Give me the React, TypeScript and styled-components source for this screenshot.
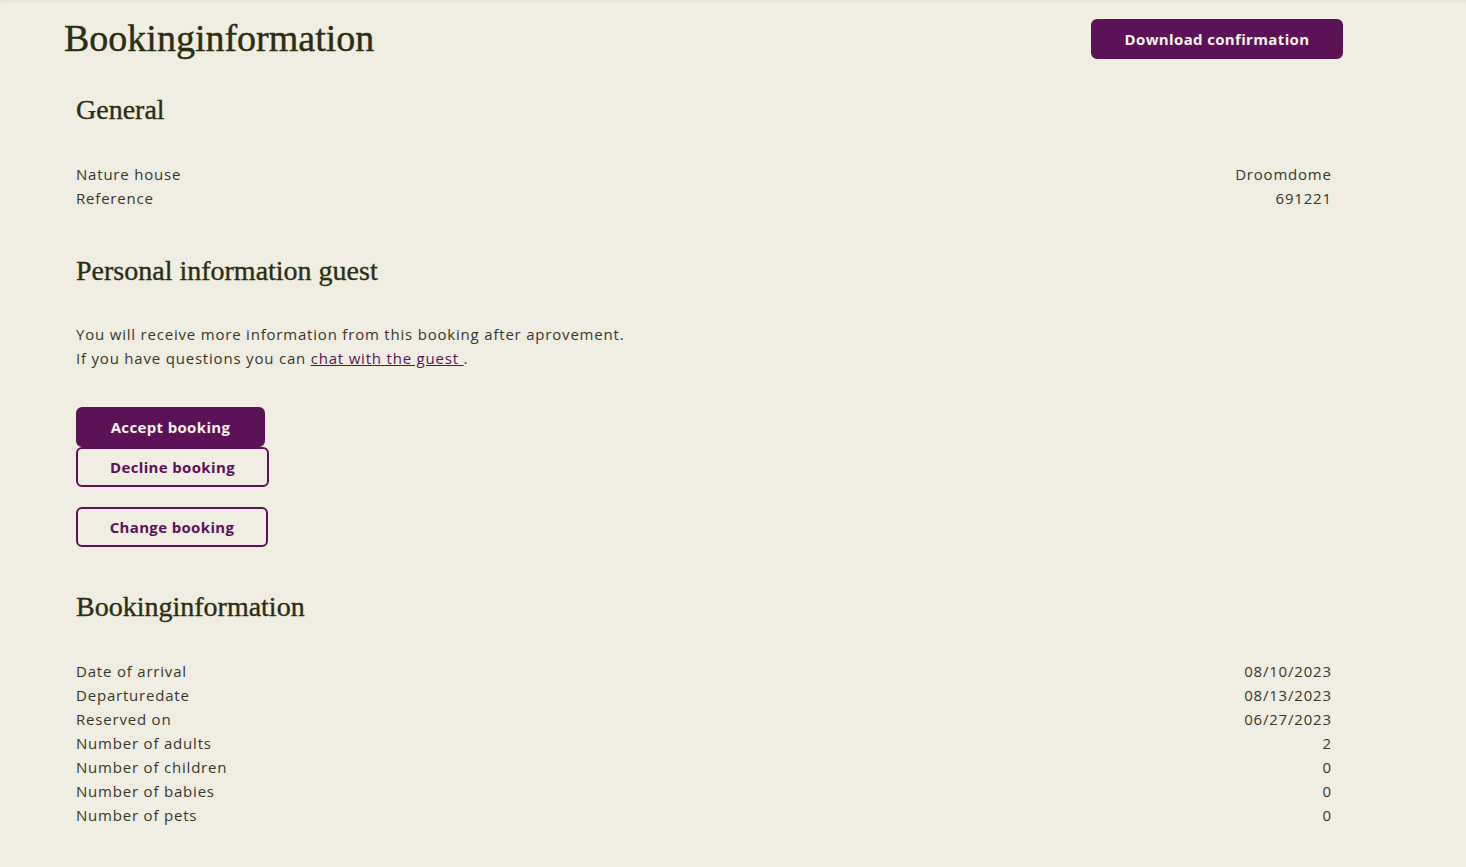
import React from "react";
import styled, { createGlobalStyle } from "styled-components";

const GlobalStyle = createGlobalStyle`
  html, body {
    margin: 0;
    padding: 0;
    background: #f0ede2;
  }
  body {
    font-family: "Open Sans", "Liberation Sans", sans-serif;
    color: #37372a;
  }
  * { box-sizing: border-box; }
`;

const Page = styled.div`
  min-height: 867px;
  background: #f0ede2;
  box-shadow: inset 0 3px 3px -2px rgba(0, 0, 0, 0.06);
  padding: 16px 123px 40px 64px;
`;

const Header = styled.header`
  display: flex;
  justify-content: space-between;
  align-items: flex-start;
`;

const Title = styled.h1`
  margin: 0;
  font-family: "Liberation Serif", "DejaVu Serif", serif;
  font-weight: 400;
  font-size: 38px;
  line-height: 44px;
  color: #2b2e10;
  -webkit-text-stroke: 0.4px #2b2e10;
`;

const Button = styled.button<{ $variant?: "solid" | "outline"; $width?: number }>`
  height: 40px;
  ${(p) => (p.$width ? `width: ${p.$width}px;` : "")}
  padding: 0;
  white-space: nowrap;
  border-radius: 6px;
  font-family: "Open Sans", "Liberation Sans", sans-serif;
  font-weight: 700;
  font-size: 15px;
  letter-spacing: 0.35px;
  cursor: pointer;
  border: 2px solid #5c1257;
  background: ${(p) => (p.$variant === "outline" ? "transparent" : "#5c1257")};
  color: ${(p) => (p.$variant === "outline" ? "#5c1257" : "#f6f1ee")};
`;

const HeaderButton = styled(Button)`
  margin-top: 3px;
`;

const Content = styled.main`
  padding: 0 12px;
`;

const Section = styled.section<{ $top: number }>`
  margin-top: ${(p) => p.$top}px;
`;

const SectionTitle = styled.h2`
  margin: 0 0 35px;
  font-family: "Liberation Serif", "DejaVu Serif", serif;
  font-weight: 400;
  font-size: 28px;
  line-height: 32px;
  color: #2b2e10;
  -webkit-text-stroke: 0.35px #2b2e10;
`;

const Rows = styled.dl`
  margin: 0;
  padding-top: 1px;
`;

const Row = styled.div`
  display: flex;
  justify-content: space-between;
  line-height: 24px;
  font-size: 15px;
  letter-spacing: 0.8px;
`;

const Term = styled.dt`
  margin: 0;
`;

const Value = styled.dd`
  margin: 0 -0.8px 0 0;
  text-align: right;
`;

const Paragraph = styled.p`
  margin: 0;
  font-size: 15px;
  line-height: 24px;
  letter-spacing: 0.8px;
`;

const Link = styled.a`
  color: #5c1257;
  text-decoration: underline;
`;

const Actions = styled.div`
  display: flex;
  flex-direction: column;
  align-items: flex-start;
  margin-top: 37px;
`;

const Spacer = styled.div`
  height: 20px;
`;

const general = [
  ["Nature house", "Droomdome"],
  ["Reference", "691221"],
];

const booking = [
  ["Date of arrival", "08/10/2023"],
  ["Departuredate", "08/13/2023"],
  ["Reserved on", "06/27/2023"],
  ["Number of adults", "2"],
  ["Number of children", "0"],
  ["Number of babies", "0"],
  ["Number of pets", "0"],
];

export default function App() {
  return (
    <>
      <GlobalStyle />
      <Page>
        <Header>
          <Title>Bookinginformation</Title>
          <HeaderButton $width={252}>Download confirmation</HeaderButton>
        </Header>
        <Content>
          <Section $top={34}>
            <SectionTitle>General</SectionTitle>
            <Rows>
              {general.map(([k, v]) => (
                <Row key={k}>
                  <Term>{k}</Term>
                  <Value>{v}</Value>
                </Row>
              ))}
            </Rows>
          </Section>
          <Section $top={45}>
            <SectionTitle>Personal information guest</SectionTitle>
            <Paragraph>
              You will receive more information from this booking after aprovement.
              <br />
              If you have questions you can <Link href="#">chat with the guest </Link>.
            </Paragraph>
            <Actions>
              <Button $width={189}>Accept booking</Button>
              <Button $variant="outline" $width={193}>Decline booking</Button>
              <Spacer />
              <Button $variant="outline" $width={192}>Change booking</Button>
            </Actions>
          </Section>
          <Section $top={44}>
            <SectionTitle>Bookinginformation</SectionTitle>
            <Rows>
              {booking.map(([k, v]) => (
                <Row key={k}>
                  <Term>{k}</Term>
                  <Value>{v}</Value>
                </Row>
              ))}
            </Rows>
          </Section>
        </Content>
      </Page>
    </>
  );
}
